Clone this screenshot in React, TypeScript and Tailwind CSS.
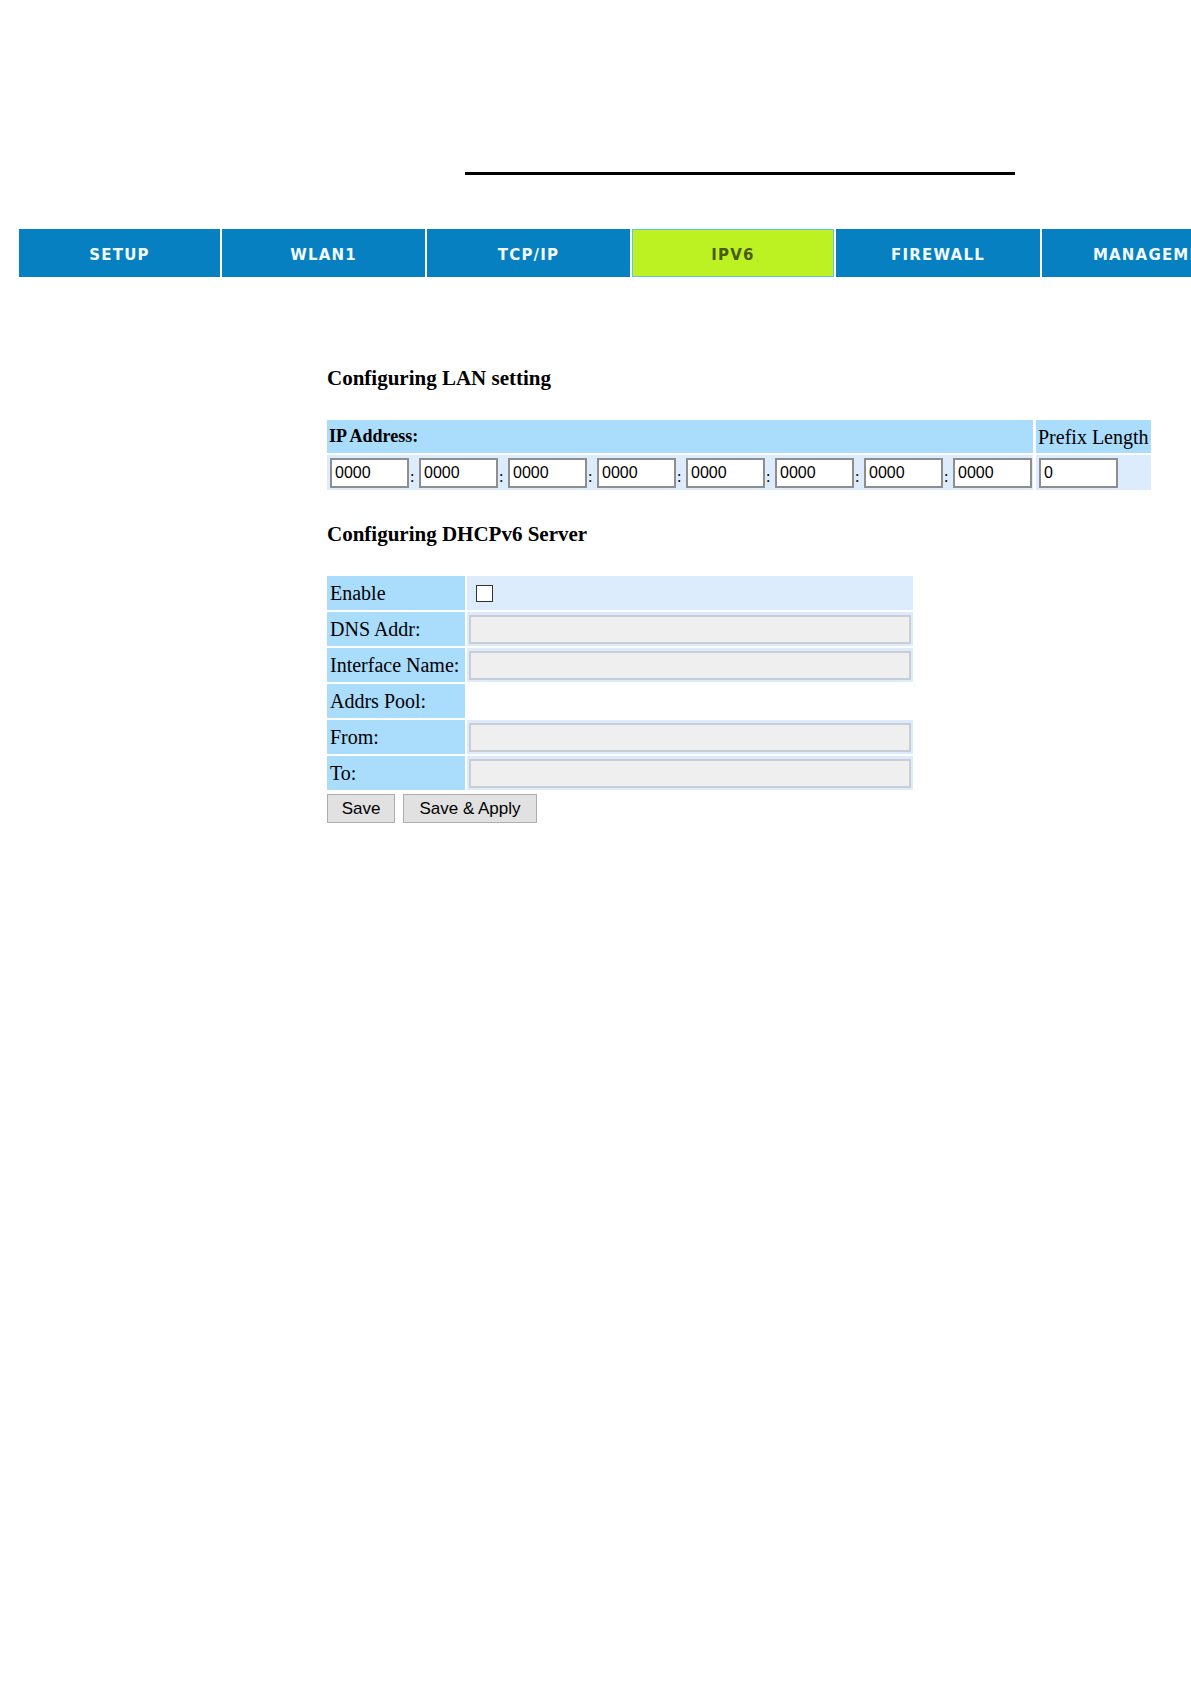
import React from 'react';

const tabs = ['SETUP', 'WLAN1', 'TCP/IP', 'IPV6', 'FIREWALL', 'MANAGEMENT'];
const widths = ['w-[201px]', 'w-[203px]', 'w-[203px]', 'w-[202px]', 'w-[204px]', 'w-[235px]'];

function IpBox({ value }: { value: string }) {
  return (
    <input
      readOnly
      value={value}
      className="w-[79px] h-[30px] shrink-0 border-2 border-[#8e8e8e] bg-white px-[3px] text-[16px] text-black outline-none font-['Liberation_Sans',Arial,sans-serif]"
    />
  );
}

function DisabledBox() {
  return (
    <input
      disabled
      className="w-full h-[29px] border-2 border-[#c9ced6] bg-[#efefef] outline-none"
    />
  );
}

export default function App() {
  const rows: { label: string; kind: 'check' | 'input' | 'empty' }[] = [
    { label: 'Enable', kind: 'check' },
    { label: 'DNS Addr:', kind: 'input' },
    { label: 'Interface Name:', kind: 'input' },
    { label: 'Addrs Pool:', kind: 'empty' },
    { label: 'From:', kind: 'input' },
    { label: 'To:', kind: 'input' },
  ];

  return (
    <div className="min-h-[1684px] w-full bg-white pt-[172px] font-['Liberation_Serif','Times_New_Roman',serif] text-black">
      {/* title rule */}
      <div className="ml-[465px] w-[550px] h-[3px] bg-black" />

      {/* Top nav, last tab runs off the page like the original */}
      <div className="mt-[54px] ml-[19px] overflow-hidden">
        <div className="flex gap-[2px] h-[48px] w-max">
          {tabs.map((t, i) => {
            const active = t === 'IPV6';
            return (
              <div
                key={t}
                className={`${widths[i]} shrink-0 flex items-center justify-center pt-[4px] font-['DejaVu_Sans',Verdana,sans-serif] font-bold text-[15px] tracking-[1.2px] ${
                  active
                    ? 'bg-[#bdf222] text-[#4b5a16] border border-[#5cc6e6]'
                    : 'bg-[#0680c1] text-[#f2f9ff]'
                }`}
              >
                {t}
              </div>
            );
          })}
        </div>
      </div>

      <div className="ml-[327px]">
        {/* LAN */}
        <h2 className="mt-[89px] text-[21px] leading-[24px] font-bold">Configuring LAN setting</h2>

        <div className="mt-[30px] grid grid-cols-[706px_115px] gap-x-[3px] gap-y-[2px]">
          <div className="h-[33px] bg-[#aadcfc] flex items-center pl-[2px] text-[18px] font-bold">
            IP Address:
          </div>
          <div className="h-[33px] bg-[#aadcfc] flex items-center pl-[2px] text-[20px]">
            Prefix Length
          </div>
          <div className="h-[35px] bg-[#ddecfd] flex items-center pl-[3px]">
            {Array.from({ length: 8 }).map((_, i) => (
              <React.Fragment key={i}>
                {i > 0 && (
                  <span className="w-[10px] shrink-0 text-[16px] leading-none pt-[8px] pl-[1px]">:</span>
                )}
                <IpBox value="0000" />
              </React.Fragment>
            ))}
          </div>
          <div className="h-[35px] bg-[#ddecfd] flex items-center pl-[3px]">
            <IpBox value="0" />
          </div>
        </div>

        {/* DHCPv6 */}
        <h2 className="mt-[32px] text-[21px] leading-[24px] font-bold">Configuring DHCPv6 Server</h2>

        <div className="mt-[30px] grid grid-cols-[138px_446px] gap-[2px] w-max">
          {rows.map(r => (
            <React.Fragment key={r.label}>
              <div className="h-[34px] bg-[#aadcfc] flex items-center pl-[3px] text-[20px] whitespace-nowrap">
                {r.label}
              </div>
              {r.kind === 'check' && (
                <div className="h-[34px] bg-[#ddecfd] flex items-center pl-[9px]">
                  <div className="w-[17px] h-[17px] border border-[#333] bg-white" />
                </div>
              )}
              {r.kind === 'input' && (
                <div className="h-[34px] bg-[#ddecfd] flex items-center px-[2px]">
                  <DisabledBox />
                </div>
              )}
              {r.kind === 'empty' && <div className="h-[34px] bg-white" />}
            </React.Fragment>
          ))}
        </div>

        <div className="mt-[4px] flex gap-[8px] font-['Liberation_Sans',Arial,sans-serif] text-[17px]">
          <button className="w-[68px] h-[29px] bg-[#e1e1e1] border border-[#adadad] text-black">Save</button>
          <button className="w-[134px] h-[29px] bg-[#e1e1e1] border border-[#adadad] text-black">Save &amp; Apply</button>
        </div>
      </div>
    </div>
  );
}
